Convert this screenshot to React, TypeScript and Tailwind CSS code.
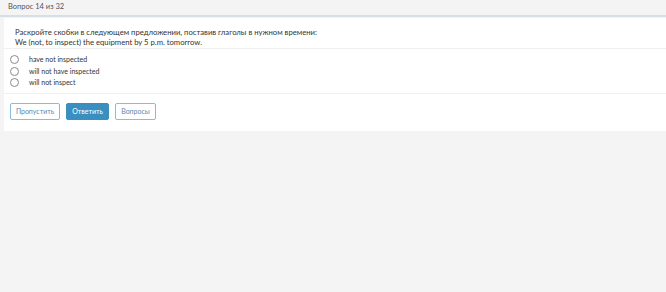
export default function App() {
  const options = ['have not inspected', 'will not have inspected', 'will not inspect'];
  return (
    <div className="h-[292px] w-[666px] bg-[#f4f4f4] font-['Lato',sans-serif] text-[#333]">
      {/* Заголовок */}
      <div className="h-[17px] border-b-2 border-[#d8dee5] pl-[8px] pt-[1px] text-[7.5px] leading-[11px] text-[#555]">
        Вопрос 14 из 32
      </div>

      {/* Карточка вопроса */}
      <div className="ml-[4px] mt-[1px] bg-white">
        <div className="border-b border-[#f0f0f0] pb-[1px] pl-[11px] pt-[10px] text-[7.7px] leading-[9.5px]">
          <div>Раскройте скобки в следующем предложении, поставив глаголы в нужном времени:</div>
          <div>We (not, to inspect) the equipment by 5 p.m. tomorrow.</div>
        </div>

        <div className="flex flex-col gap-[2px] border-b border-[#f0f0f0] pb-[5px] pl-[6px] pt-[6px] text-[7px] leading-[9.5px]">
          {options.map((o) => (
            <label key={o} className="flex items-center gap-[10px]">
              <span className="h-[9px] w-[9px] rounded-full border border-[#8a8a8a] bg-white" />
              <span>{o}</span>
            </label>
          ))}
        </div>

        <div className="flex gap-[6px] pb-[11px] pl-[6px] pt-[9px] text-[7px]">
          <button className="h-[17px] w-[50px] rounded-[2px] border border-[#8cbad8] text-[#5f87aa]">Пропустить</button>
          <button className="h-[17px] w-[43px] rounded-[2px] border border-[#3a8fc0] bg-[#3a8fc0] text-white">Ответить</button>
          <button className="h-[17px] w-[41px] rounded-[2px] border border-[#8cbad8] text-[#5f87aa]">Вопросы</button>
        </div>
      </div>
    </div>
  );
}
